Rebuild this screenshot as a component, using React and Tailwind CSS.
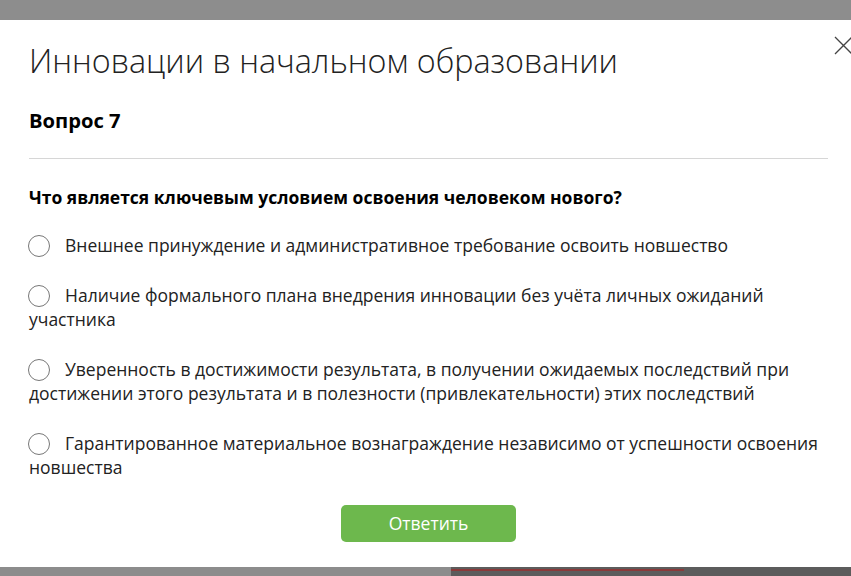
import { useState } from 'react';

const OPTIONS = [
  'Внешнее принуждение и административное требование освоить новшество',
  'Наличие формального плана внедрения инновации без учёта личных ожиданий участника',
  'Уверенность в достижимости результата, в получении ожидаемых последствий при достижении этого результата и в полезности (привлекательности) этих последствий',
  'Гарантированное материальное вознаграждение независимо от успешности освоения новшества',
];

export default function App() {
  const [picked, setPicked] = useState(null);

  return (
    <div className="w-[851px] h-[576px] overflow-hidden bg-[#8c8c8c] flex flex-col" style={{ fontFamily: '"Open Sans", sans-serif' }}>
      {/* backdrop top */}
      <div className="h-[20px] shrink-0 bg-[#8d8d8d]" />

      {/* modal */}
      <div className="relative h-[547px] shrink-0 bg-white px-[29px] pt-[20px] text-[#111]">
        <button className="absolute right-[-2px] top-[15px] w-[20px] h-[20px] text-[#444]">
          <svg viewBox="0 0 20 20" width="20" height="20" fill="none" stroke="currentColor" strokeWidth="1.3">
            <path d="M2 2 L19 19 M19 2 L2 19" />
          </svg>
        </button>

        <h1 className="text-[32.3px] font-light leading-[40px] text-[#222]">
          Инновации в начальном образовании
        </h1>

        <h2 className="mt-[27px] text-[20.2px] font-bold leading-[26px] text-black">Вопрос 7</h2>

        <div className="mt-[25px] mr-[-6px] border-t border-[#d6d6d6]" />

        <p className="mt-[26px] text-[17.5px] font-bold leading-[24px] text-black">
          Что является ключевым условием освоения человеком нового?
        </p>

        <div className="mt-[24px] flex flex-col gap-[26px]">
          {OPTIONS.map((text, i) => (
            <label
              key={i}
              onClick={() => setPicked(i)}
              className="block text-[17.5px] leading-[24px] text-[#222] cursor-pointer"
            >
              <span className="inline-block align-[-5px] w-[22px] h-[22px] rounded-full border-[1.5px] border-[#777] mr-[15px] ml-[-1px] relative">
                {picked === i && (
                  <span className="absolute inset-[4px] rounded-full bg-[#6cb84c]" />
                )}
              </span>
              {text}
            </label>
          ))}
        </div>

        <div className="mt-[26px] flex justify-center">
          <button className="w-[175px] h-[37px] rounded-[5px] bg-[#6db84d] text-white text-[17.5px] leading-[37px] ml-[6px]">
            Ответить
          </button>
        </div>
      </div>

      {/* backdrop bottom */}
      <div className="flex flex-1">
        <div className="w-[451px] bg-[#8c8c8c]" />
        <div className="flex-1 bg-[#5c5c5c] pt-[2px]">
          <div className="w-[233px] h-[2px] bg-[#8a3a3a]" />
        </div>
      </div>
    </div>
  );
}
